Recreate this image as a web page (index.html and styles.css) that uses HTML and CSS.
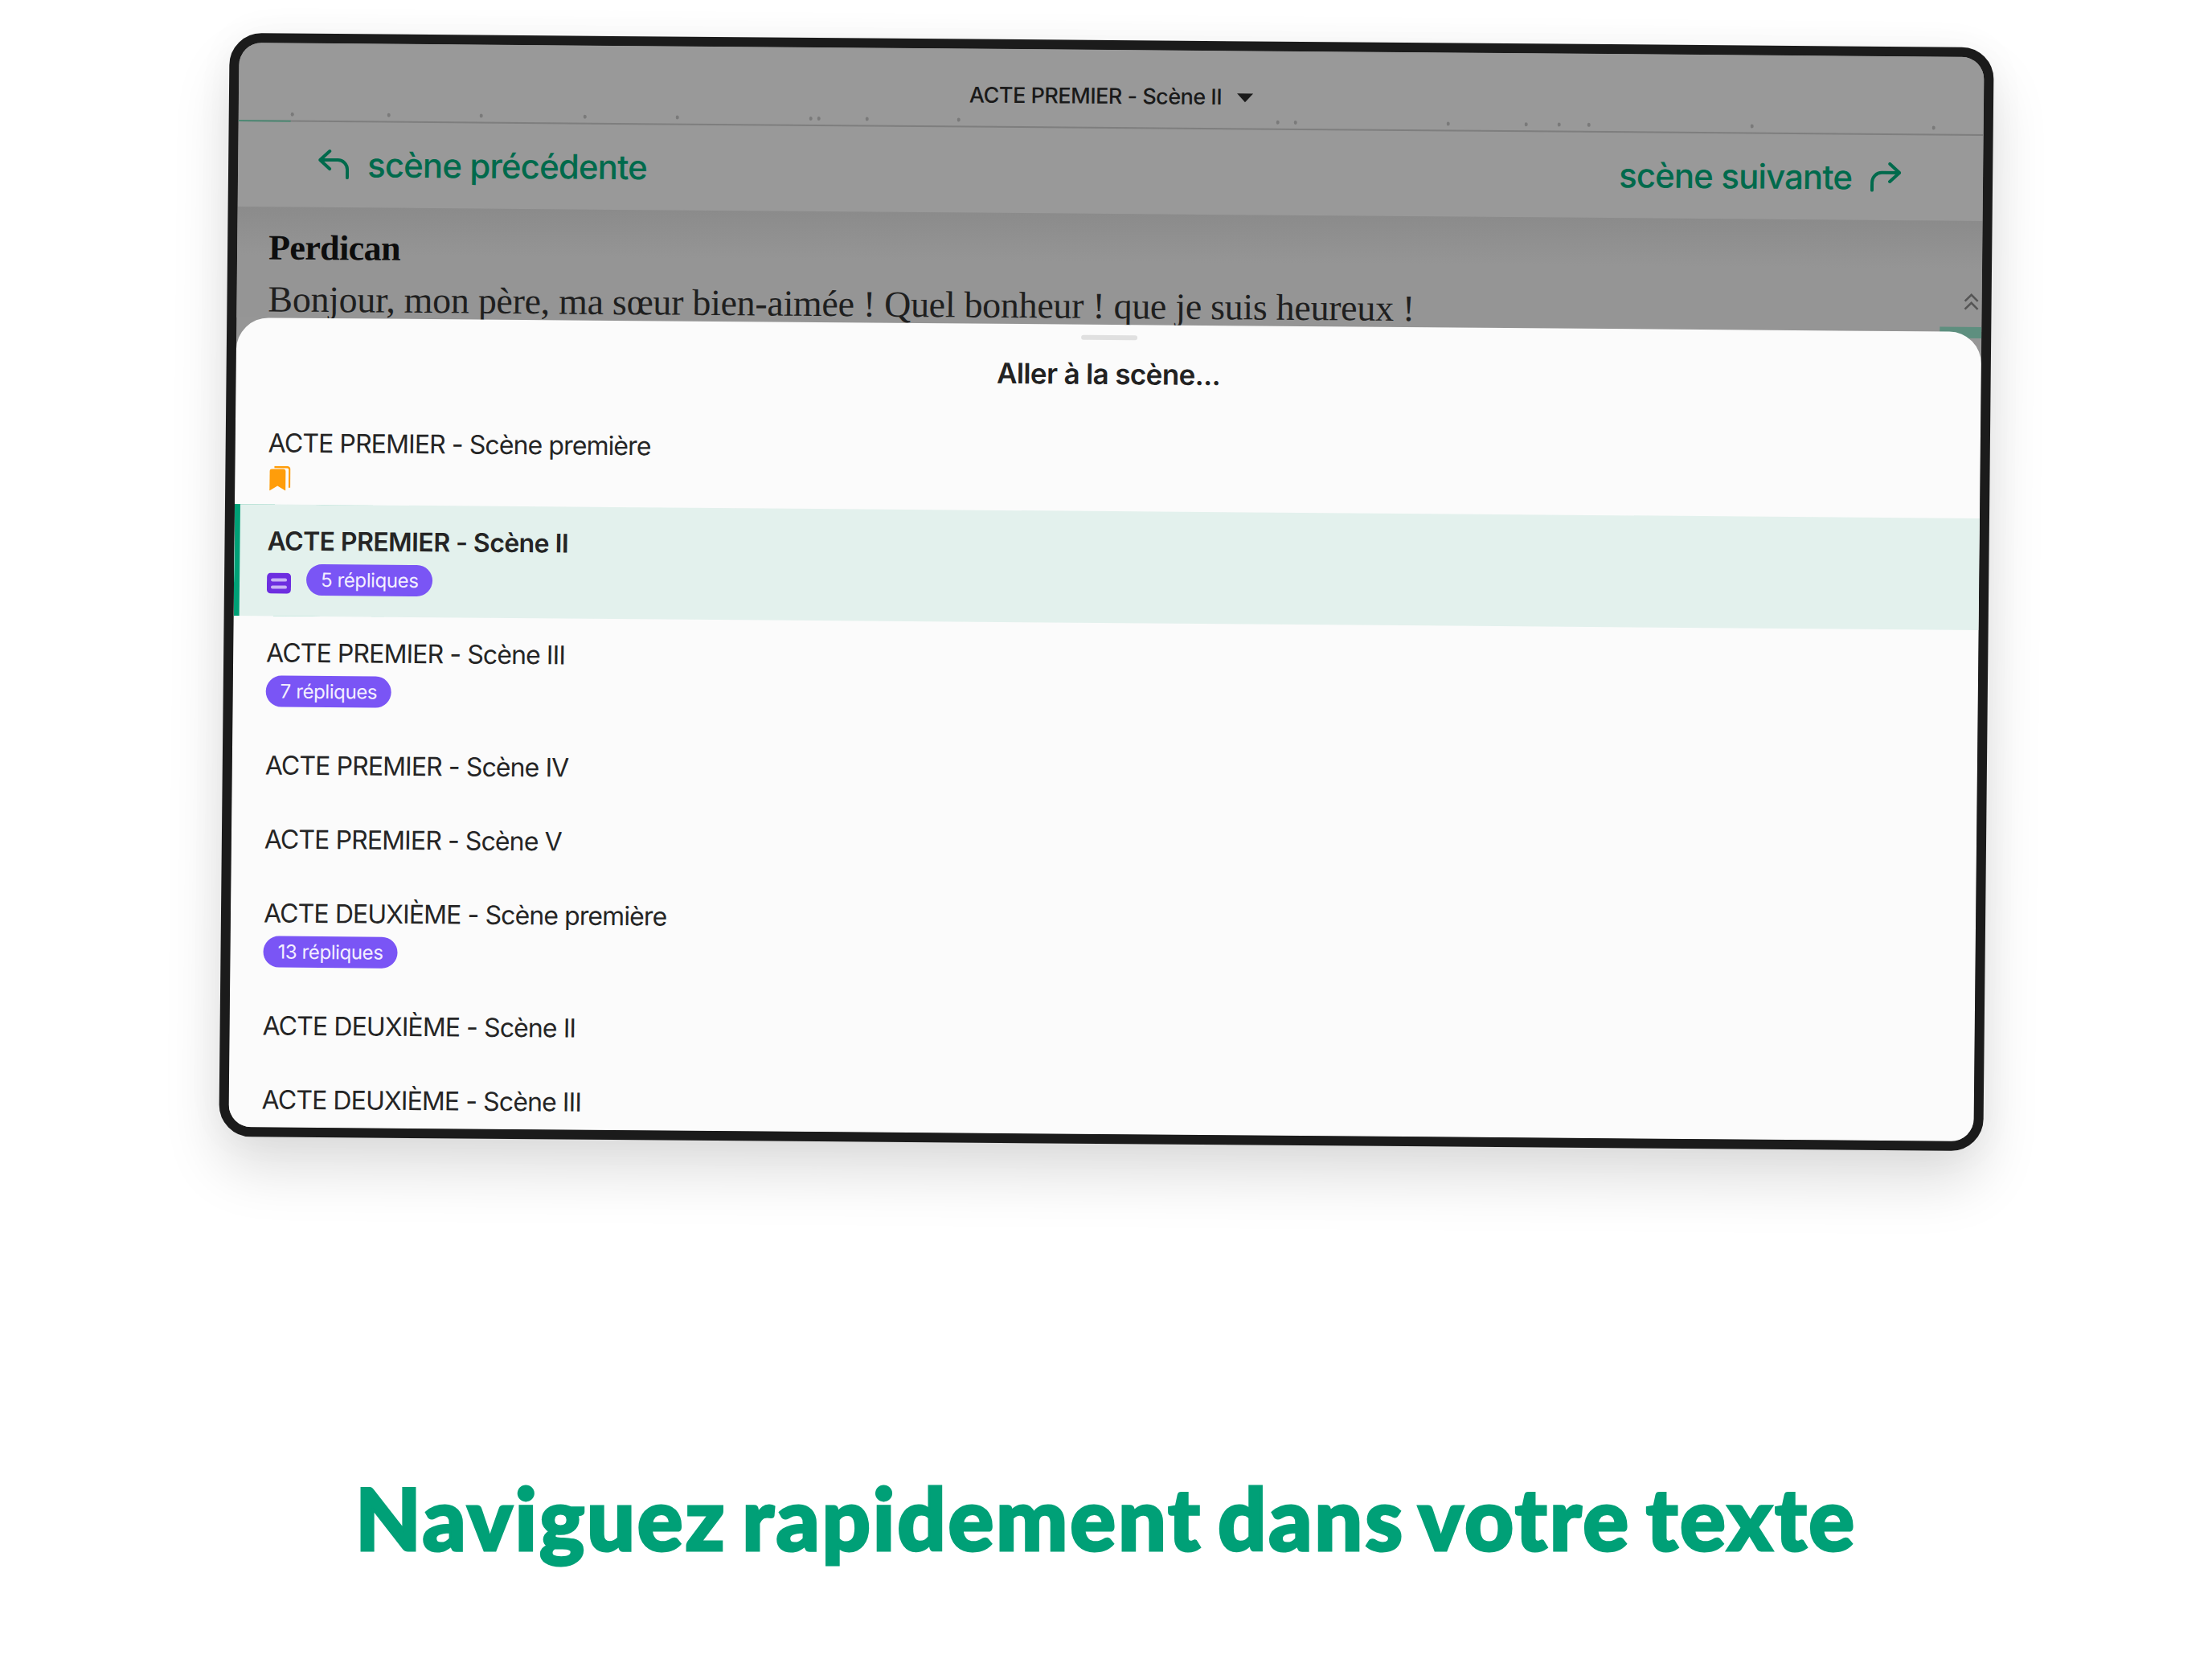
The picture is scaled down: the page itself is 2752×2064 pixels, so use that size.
FILE: index.html
```html
<!DOCTYPE html>
<html lang="fr">
<head>
<meta charset="utf-8">
<title>Naviguez rapidement dans votre texte</title>
<link rel="stylesheet" href="styles.css">
</head>
<body>
<main class="page">
  <div class="tablet">
    <div class="screen">
      <header class="topbar">
        <div class="scene-select"><span>ACTE PREMIER - Scène II</span><i class="caret"></i></div>
        <div class="progress">
          <div class="progress-fill"></div>
          <i class="dot" style="left:2.98%"></i>
          <i class="dot" style="left:8.51%"></i>
          <i class="dot" style="left:13.81%"></i>
          <i class="dot" style="left:19.75%"></i>
          <i class="dot" style="left:25.05%"></i>
          <i class="dot" style="left:32.69%"></i>
          <i class="dot" style="left:33.15%"></i>
          <i class="dot" style="left:35.92%"></i>
          <i class="dot" style="left:41.17%"></i>
          <i class="dot" style="left:59.46%"></i>
          <i class="dot" style="left:60.47%"></i>
          <i class="dot" style="left:69.22%"></i>
          <i class="dot" style="left:73.69%"></i>
          <i class="dot" style="left:75.58%"></i>
          <i class="dot" style="left:77.28%"></i>
          <i class="dot" style="left:86.63%"></i>
          <i class="dot" style="left:97.04%"></i>
        </div>
        <nav class="scene-nav">
          <a class="nav-link">
            <svg class="nav-icon" viewBox="0 0 38 37"><path d="M14 2 L2 13 L14 24 M2 13 H24 a12 12 0 0 1 12 12 V35"/></svg>
            <span>scène précédente</span>
          </a>
          <a class="nav-link">
            <span>scène suivante</span>
            <svg class="nav-icon" viewBox="0 0 38 37"><path d="M24 2 L36 13 L24 24 M36 13 H14 a12 12 0 0 0 -12 12 V35"/></svg>
          </a>
        </nav>
      </header>
      <section class="reader">
        <h2 class="speaker">Perdican</h2>
        <p class="line">Bonjour, mon père, ma sœur bien-aimée ! Quel bonheur ! que je suis heureux !</p>
        <svg class="chevrons" viewBox="0 0 20 22"><path d="M2 10 L10 2 L18 10 M2 20 L10 12 L18 20"/></svg>
        <div class="peek"></div>
      </section>
      <section class="sheet">
        <div class="handle"></div>
        <h1 class="sheet-title">Aller à la scène...</h1>
        <ul class="rows">
          <li class="row row-first">
            <div class="row-title">ACTE PREMIER - Scène première</div>
            <div class="row-meta">
              <svg class="bookmark" viewBox="0 0 26 31"><path class="bm-back" d="M6 1.5 H22 a3 3 0 0 1 3 3 V27"/><path class="bm-front" d="M0 7 a3 3 0 0 1 3 -3 H17 a3 3 0 0 1 3 3 V31 L10 25 L0 31 Z"/></svg>
            </div>
          </li>
          <li class="row row-active">
            <div class="row-title">ACTE PREMIER - Scène II</div>
            <div class="row-meta">
              <svg class="note" viewBox="0 0 30 26"><rect width="30" height="26" rx="5"/><path d="M7 9 H23 M7 18 H23"/></svg>
              <span class="pill">5 répliques</span>
            </div>
          </li>
          <li class="row">
            <div class="row-title">ACTE PREMIER - Scène III</div>
            <div class="row-meta"><span class="pill">7 répliques</span></div>
          </li>
          <li class="row"><div class="row-title">ACTE PREMIER - Scène IV</div></li>
          <li class="row"><div class="row-title">ACTE PREMIER - Scène V</div></li>
          <li class="row">
            <div class="row-title">ACTE DEUXIÈME - Scène première</div>
            <div class="row-meta"><span class="pill">13 répliques</span></div>
          </li>
          <li class="row"><div class="row-title">ACTE DEUXIÈME - Scène II</div></li>
          <li class="row"><div class="row-title">ACTE DEUXIÈME - Scène III</div></li>
        </ul>
      </section>
    </div>
  </div>
  <p class="caption">Naviguez rapidement dans votre texte</p>
</main>
</body>
</html>
```

FILE: styles.css
```css
* { box-sizing: border-box; }
html, body { margin: 0; padding: 0; background: #fff; }
.page {
  width: 2752px;
  height: 2064px;
  overflow: hidden;
  display: flex;
  flex-direction: column;
  align-items: center;
  padding-top: 50px;
  font-family: Inter, "Liberation Sans", sans-serif;
}
.tablet {
  width: 2195px;
  height: 1373px;
  flex: none;
  border: 12px solid #1b1b1b;
  border-radius: 40px;
  background: #1b1b1b;
  transform: matrix(1, 0.0082, -0.0098, 1, 0, 0);
  box-shadow: 0 40px 70px rgba(0,0,0,.13), 0 0 50px rgba(0,0,0,.04);
}
.screen {
  position: relative;
  height: 100%;
  overflow: hidden;
  border-radius: 28px;
  background: #969696;
  display: flex;
  flex-direction: column;
}

/* top bar */
.topbar {
  height: 204px;
  flex: none;
  background: #999;
  display: flex;
  flex-direction: column;
}
.scene-select {
  height: 96px;
  flex: none;
  padding-top: 41px;
  display: flex;
  justify-content: center;
  align-items: flex-start;
  gap: 19px;
  font-size: 27px;
  font-weight: 500;
  line-height: 34px;
  letter-spacing: -0.5px;
  color: #1a1a1a;
}
.caret {
  margin-top: 12px;
  width: 0;
  height: 0;
  border-left: 10px solid transparent;
  border-right: 10px solid transparent;
  border-top: 11px solid #1a1a1a;
}
.progress {
  position: relative;
  height: 2px;
  flex: none;
  background: #7e7e7e;
}
.progress-fill {
  width: 3%;
  height: 100%;
  background: #4e8a75;
}
.dot {
  position: absolute;
  top: -10px;
  width: 4px;
  height: 5px;
  border-radius: 50%;
  background: #7a7a7a;
}
.scene-nav {
  flex: 1;
  display: flex;
  justify-content: space-between;
  align-items: center;
  padding: 0 102px 2px 100px;
}
.nav-link {
  display: flex;
  align-items: center;
  gap: 23px;
  font-size: 42px;
  font-weight: 500;
  letter-spacing: -0.9px;
  color: #006a4c;
}
.nav-icon {
  width: 38px;
  height: 37px;
  fill: none;
  stroke: #006a4c;
  stroke-width: 4;
  stroke-linecap: round;
  stroke-linejoin: round;
}

/* reader behind the sheet */
.reader {
  position: relative;
  height: 138px;
  flex: none;
  padding: 23px 39px 0;
  background: linear-gradient(#8b8b8b, #959595 60px);
  font-family: "Liberation Serif", serif;
}
.speaker {
  margin: 0;
  font-size: 44px;
  line-height: 56px;
  font-weight: 700;
  letter-spacing: -0.6px;
  color: #0d0d0d;
}
.line {
  margin: 8px 0 0;
  font-size: 46px;
  line-height: 56px;
  letter-spacing: -0.3px;
  color: #1f1f1f;
  white-space: nowrap;
}
.chevrons {
  position: absolute;
  right: 3px;
  top: 90px;
  width: 20px;
  height: 22px;
  fill: none;
  stroke: #555;
  stroke-width: 2.5;
}
.peek {
  position: absolute;
  right: 0;
  bottom: -8px;
  width: 52px;
  height: 14px;
  background: #5e8f7f;
}

/* bottom sheet */
.sheet {
  position: relative;
  flex: 1;
  min-height: 0;
  background: #fbfbfb;
  border-radius: 40px 40px 0 0;
  overflow: hidden;
}
.handle {
  width: 70px;
  height: 6px;
  margin: 13px auto 0;
  border-radius: 3px;
  background: #e0e0e0;
}
.sheet-title {
  margin: 19px 0 0;
  text-align: center;
  font-size: 35px;
  line-height: 46px;
  font-weight: 600;
  letter-spacing: -0.63px;
  color: #222;
}
.rows {
  list-style: none;
  margin: 26px 0 0;
  padding: 0;
}
.row {
  padding: 24px 41px;
}
.row-first { padding-bottom: 14px; }
.row-active {
  background: #e3f1ed;
  box-shadow: inset 7px 0 0 #00a076;
}
.row-title {
  font-size: 32px;
  line-height: 44px;
  letter-spacing: -0.9px;
  color: #252525;
  white-space: nowrap;
}
.row-active .row-title { font-weight: 600; letter-spacing: -0.55px; }
.row-meta {
  margin: 6px 0 3px;
  display: flex;
  align-items: center;
  gap: 19px;
}
.row-active .row-meta { margin-bottom: 2px; }
.pill {
  height: 39px;
  padding: 0 18px;
  border-radius: 20px;
  background: #7a55f5;
  color: #f3efff;
  font-size: 24px;
  line-height: 39px;
  letter-spacing: -0.4px;
}
.bookmark { width: 26px; height: 31px; display: block; margin-left: 2px; }
.bm-front { fill: #ff9d0a; }
.bm-back { fill: none; stroke: #ff9d0a; stroke-width: 2.5; }
.note { width: 30px; height: 26px; margin-top: 9px; }
.note rect { fill: #6d2ee0; }
.note path { stroke: #c9b4f5; stroke-width: 4; stroke-linecap: round; }

/* caption */
.caption {
  margin: 400px 0 0;
  font-family: Lato, sans-serif;
  font-weight: 900;
  font-size: 106px;
  line-height: 130px;
  letter-spacing: 2.8px;
  word-spacing: -9px;
  -webkit-text-stroke: 3px #00a077;
  color: #00a077;
  white-space: nowrap;
}
```
